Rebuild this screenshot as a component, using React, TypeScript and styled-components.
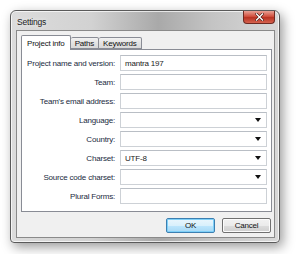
import * as React from "react"
import styled, { createGlobalStyle } from "styled-components"

const GlobalStyle = createGlobalStyle`
  html, body {
    margin: 0;
    padding: 0;
    background: #ffffff;
  }
  body {
    font-family: "Liberation Sans", Arial, sans-serif;
    font-size: 8px;
    letter-spacing: -0.2px;
  }
`

//window chrome
const Page = styled.div`
  width: 300px;
  height: 254px;
  padding: 10px 0 0 10px;
  box-sizing: border-box;
`

const Window = styled.div`
  width: 270px;
  height: 233px;
  box-sizing: border-box;
  border: 1px solid #5a5a5a;
  border-radius: 6px 6px 4px 4px;
  background: linear-gradient(
    90deg,
    #dcdcdc 0%,
    #d2d2d2 30%,
    #a9a9a9 55%,
    #c4c4c4 75%,
    #d8d8d8 100%
  );
  box-shadow: 3px 4px 12px rgba(0, 0, 0, 0.4), inset 0 0 0 1px rgba(255, 255, 255, 0.7);
  display: flex;
  flex-direction: column;
  padding: 0 4px 4px 5px;
`

const TitleBar = styled.div`
  height: 19px;
  display: flex;
  align-items: flex-start;
  justify-content: space-between;
`

const Title = styled.span`
  margin-top: 6px;
  margin-left: 1px;
  font-size: 8.5px;
  color: #1b1b1b;
  text-shadow: 0 0 4px rgba(255, 255, 255, 0.9);
`

const CloseButton = styled.div`
  width: 32px;
  height: 13px;
  border: 1px solid #6d2a22;
  border-top: none;
  border-radius: 0 0 4px 4px;
  box-sizing: border-box;
  background: linear-gradient(180deg, #e8a195 0%, #d1503f 45%, #b83222 55%, #d6634f 100%);
  display: flex;
  align-items: center;
  justify-content: center;
`

const Client = styled.div`
  flex: 1;
  background: #f0f0f0;
  border: 1px solid #8a8a8a;
  display: flex;
  flex-direction: column;
  padding: 4px 2px 0 4px;
`

//tabs
const TabStrip = styled.div`
  display: flex;
  align-items: flex-end;
  height: 14px;
  position: relative;
  z-index: 1;
`

const Tab = styled.div<{ $active?: boolean }>`
  box-sizing: border-box;
  height: ${(p) => (p.$active ? "15px" : "12px")};
  padding: ${(p) => (p.$active ? "3px 5px 0 5px" : "1px 4px 0 4px")};
  margin-bottom: ${(p) => (p.$active ? "-1px" : "0")};
  border: 1px solid #898c95;
  border-bottom: ${(p) => (p.$active ? "none" : "1px solid #898c95")};
  border-left: ${(p) => (p.$active ? "1px solid #898c95" : "none")};
  border-radius: 2px 2px 0 0;
  background: ${(p) =>
    p.$active ? "#ffffff" : "linear-gradient(180deg, #f2f2f2 0%, #e3e3e3 50%, #d9d9d9 100%)"};
  color: #111;
  line-height: 9px;
  white-space: nowrap;
`

const Panel = styled.div`
  background: #ffffff;
  border: 1px solid #898c95;
  height: 163px;
  box-sizing: border-box;
  padding: 5px 4px 0 0;
`

const Form = styled.div`
  display: grid;
  grid-template-columns: 93px 1fr;
  column-gap: 5px;
  row-gap: 3px;
  align-items: center;
`

const Label = styled.div`
  text-align: right;
  color: #1a2a40;
  white-space: nowrap;
`

const Field = styled.div`
  height: 16px;
  box-sizing: border-box;
  border: 1px solid #cdd1d6;
  border-top-color: #b9bec5;
  background: #ffffff;
  display: flex;
  align-items: center;
  justify-content: space-between;
  padding: 0 5px 0 4px;
  color: #1a1a1a;
`

const Arrow = styled.span`
  width: 0;
  height: 0;
  border-left: 3px solid transparent;
  border-right: 3px solid transparent;
  border-top: 4px solid #111;
`

//buttons
const ButtonRow = styled.div`
  display: flex;
  justify-content: flex-end;
  gap: 7px;
  margin-top: 6px;
  padding-right: 1px;
`

const Button = styled.div<{ $focus?: boolean }>`
  width: 49px;
  height: 15px;
  box-sizing: border-box;
  border: 1px solid ${(p) => (p.$focus ? "#3c7fb1" : "#707070")};
  border-radius: 2px;
  background: ${(p) =>
    p.$focus
      ? "linear-gradient(180deg, #eaf6fd 0%, #d9f0fc 50%, #bee6fd 51%, #a7d9f5 100%)"
      : "linear-gradient(180deg, #f2f2f2 0%, #ebebeb 50%, #dddddd 51%, #cfcfcf 100%)"};
  box-shadow: ${(p) => (p.$focus ? "inset 0 0 0 1px #7fd0f8" : "inset 0 0 0 1px #fcfcfc")};
  display: flex;
  align-items: center;
  justify-content: center;
  color: #111;
`

const rows: { label: string; value?: string; combo?: boolean }[] = [
  { label: "Project name and version:", value: "mantra 197" },
  { label: "Team:" },
  { label: "Team's email address:" },
  { label: "Language:", combo: true },
  { label: "Country:", combo: true },
  { label: "Charset:", value: "UTF-8", combo: true },
  { label: "Source code charset:", combo: true },
  { label: "Plural Forms:" },
]

const App = () => {
  return (
    <Page>
      <GlobalStyle />
      <Window>
        <TitleBar>
          <Title>Settings</Title>
          <CloseButton>
            <svg width="9" height="8" viewBox="0 0 9 8">
              <path
                d="M1.5 1 L7.5 7 M7.5 1 L1.5 7"
                stroke="#4a1a14"
                strokeWidth="2.6"
                strokeLinecap="square"
              />
              <path
                d="M1.5 1 L7.5 7 M7.5 1 L1.5 7"
                stroke="#ffffff"
                strokeWidth="1.4"
                strokeLinecap="square"
              />
            </svg>
          </CloseButton>
        </TitleBar>
        <Client>
          <TabStrip>
            <Tab $active>Project info</Tab>
            <Tab>Paths</Tab>
            <Tab>Keywords</Tab>
          </TabStrip>
          <Panel>
            <Form>
              {rows.map((r) => (
                <React.Fragment key={r.label}>
                  <Label>{r.label}</Label>
                  <Field>
                    <span>{r.value ?? ""}</span>
                    {r.combo && <Arrow />}
                  </Field>
                </React.Fragment>
              ))}
            </Form>
          </Panel>
          <ButtonRow>
            <Button $focus>OK</Button>
            <Button>Cancel</Button>
          </ButtonRow>
        </Client>
      </Window>
    </Page>
  )
}

export default App
